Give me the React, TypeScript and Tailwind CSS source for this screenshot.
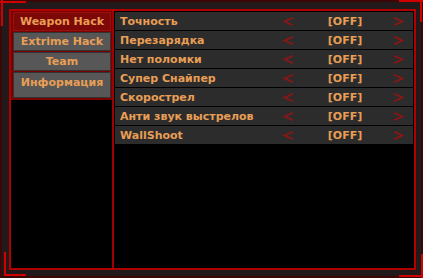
import React from "react";

const rows = [
  "Точность",
  "Перезарядка",
  "Нет поломки",
  "Супер Снайпер",
  "Скорострел",
  "Анти звук выстрелов",
  "WallShoot",
];

function Chevron({ dir }: { dir: "l" | "r" }) {
  return (
    <svg width="11" height="9" viewBox="0 0 11 9" className="block">
      {dir === "l" ? (
        <polyline points="10,0.8 1.5,4.5 10,8.2" fill="none" stroke="#8f1515" strokeWidth="1.6" />
      ) : (
        <polyline points="1,0.8 9.5,4.5 1,8.2" fill="none" stroke="#8f1515" strokeWidth="1.6" />
      )}
    </svg>
  );
}

export default function App() {
  const font = { fontFamily: '"DejaVu Sans", Verdana, sans-serif' };
  return (
    <div
      className="relative w-[423px] h-[278px] bg-[#3a0606] p-[2px] text-[11px] font-bold text-[#e89e55] leading-none"
      style={font}
    >
      {/* corner accents */}
      <div className="absolute left-0 top-[1px] w-[26px] h-[2px] bg-[#d00000]" />
      <div className="absolute left-[1px] top-0 w-[2px] h-[26px] bg-[#d00000]" />
      <div className="absolute right-0 top-0 w-[24px] h-[2px] bg-[#d00000]" />
      <div className="absolute right-[1px] top-0 w-[2px] h-[22px] bg-[#d00000]" />
      <div className="absolute left-[4px] bottom-[2px] w-[22px] h-[2px] bg-[#d00000]" />
      <div className="absolute left-[4px] bottom-[2px] w-[2px] h-[24px] bg-[#d00000]" />
      <div className="absolute right-0 bottom-[1px] w-[24px] h-[2px] bg-[#d00000]" />
      <div className="absolute right-0 bottom-0 w-[2px] h-[24px] bg-[#d00000]" />

      <div className="w-full h-full bg-[#221a1a] pl-[7px] pt-[7px] pr-[5px] pb-[6px]">
        <div className="h-full border-2 border-[#b00000] bg-black flex">
          {/* menu */}
          <div className="w-[101px] flex flex-col">
            <div className="bg-[#7a0000] pl-[1px] pr-[1px] pt-[1px] pb-[2px] flex flex-col gap-[1px]">
              <div className="ml-[1px] w-[98px] h-[19px] bg-[#7c0808] border border-[#9a1010] flex items-center justify-center">
                Weapon Hack
              </div>
              <div className="ml-[1px] w-[98px] h-[19px] bg-[#575757] border border-[#333] flex items-center justify-center">
                Extrime Hack
              </div>
              <div className="ml-[1px] w-[98px] h-[19px] bg-[#575757] border border-[#333] flex items-center justify-center">
                Team
              </div>
              <div className="ml-[1px] w-[98px] h-[26px] bg-[#575757] border border-[#333] flex justify-center pt-[4px]">
                Информация
              </div>
            </div>
          </div>
          <div className="w-[2px] bg-[#a00000]" />
          {/* rows */}
          <div className="flex-1 flex flex-col gap-[1px] pt-[1px] pl-[1px] pr-[1px]">
            {rows.map((r) => (
              <div key={r} className="h-[18px] bg-[#2c2c2c] flex items-center pl-[5px]">
                <span className="w-[163px]">{r}</span>
                <span className="w-[14px]">
                  <Chevron dir="l" />
                </span>
                <span className="w-[96px] flex justify-center">[OFF]</span>
                <Chevron dir="r" />
              </div>
            ))}
          </div>
        </div>
      </div>
    </div>
  );
}
